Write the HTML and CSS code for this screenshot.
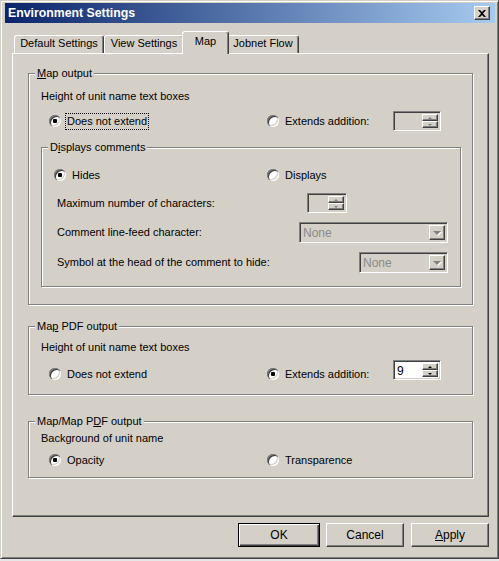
FILE: index.html
```html
<!DOCTYPE html>
<html>
<head>
<meta charset="utf-8">
<title>Environment Settings</title>
<link rel="stylesheet" href="styles.css">
</head>
<body>
<div class="window">
  <div class="titlebar">
    <span class="title">Environment Settings</span>
    <span class="close"><svg width="8" height="7" viewBox="0 0 8 7"><path d="M0 0h2l2 2 2-2h2L5 3.5 8 7H6L4 5 2 7H0l3-3.5z" fill="#000"/></svg></span>
  </div>
  <div class="client">
    <div class="tabs">
      <div class="tab t1">Default Settings</div>
      <div class="tab t2">View Settings</div>
      <div class="tab active t3">Map</div>
      <div class="tab t4">Jobnet Flow</div>
    </div>
    <div class="panel">
      <section class="group g1">
        <div class="gtitle"><span><u>M</u>ap output</span></div>
        <div class="label l1">Height of unit name text boxes</div>
        <div class="row r1">
          <div class="opt w1"><span class="radio on"></span><span class="focus">Does not extend</span></div>
          <div class="opt w2"><span class="radio"></span><span>Extends addition:</span></div>
          <div class="spin off"><div class="field"></div><div class="sbtns"><span class="sb up"></span><span class="sb down"></span></div></div>
        </div>
        <section class="group inner">
          <div class="gtitle"><span>D<u>i</u>splays comments</span></div>
          <div class="row r-hides">
            <div class="opt w3"><span class="radio on"></span><span>Hides</span></div>
            <div class="opt"><span class="radio"></span><span>Displays</span></div>
          </div>
          <div class="row r-max">
            <div class="rlabel wmax">Maximum number of characters:</div>
            <div class="spin off small"><div class="field"></div><div class="sbtns"><span class="sb up"></span><span class="sb down"></span></div></div>
          </div>
          <div class="row r-combo r-comment">
            <div class="rlabel">Comment line-feed character:</div>
            <div class="combo c1"><span class="ctext">None</span><span class="cbtn"></span></div>
          </div>
          <div class="row r-combo r-symbol">
            <div class="rlabel">Symbol at the head of the comment to hide:</div>
            <div class="combo c2"><span class="ctext">None</span><span class="cbtn"></span></div>
          </div>
        </section>
      </section>

      <section class="group g2">
        <div class="gtitle"><span>Ma<u>p</u> PDF output</span></div>
        <div class="label l2">Height of unit name text boxes</div>
        <div class="row r2">
          <div class="opt w1"><span class="radio"></span><span>Does not extend</span></div>
          <div class="opt w2"><span class="radio on"></span><span>Extends addition:</span></div>
          <div class="spin up4"><div class="field">9</div><div class="sbtns"><span class="sb up"></span><span class="sb down"></span></div></div>
        </div>
      </section>

      <section class="group g3">
        <div class="gtitle"><span>Map/Map P<u>D</u>F output</span></div>
        <div class="label l3">Background of unit name</div>
        <div class="row r3">
          <div class="opt w1"><span class="radio on"></span><span>Opacity</span></div>
          <div class="opt"><span class="radio"></span><span>Transparence</span></div>
        </div>
      </section>
    </div>
    <div class="buttons">
      <div class="btn default">OK</div>
      <div class="btn cancel">Cancel</div>
      <div class="btn"><u>A</u>pply</div>
    </div>
  </div>
</div>
</body>
</html>
```

FILE: styles.css
```css
* { box-sizing: border-box; }
html, body { margin: 0; padding: 0; }
body {
  background: #e6e6e6;
  font-family: "Liberation Sans", Arial, sans-serif;
  font-size: 11px;
  line-height: 13px;
  color: #000;
}
u { text-decoration: underline; text-underline-offset: 1px; }

.window {
  width: 499px;
  height: 559px;
  background: #d4d0c8;
  border: 1px solid;
  border-color: #d4d0c8 #404040 #404040 #d4d0c8;
  box-shadow: inset 1px 1px 0 #fff, inset -1px -1px 0 #808080;
  padding: 2px 3px 3px 4px;
  display: flex;
  flex-direction: column;
}

.titlebar {
  height: 20px;
  flex: none;
  background: linear-gradient(to right, #0a246a, #a6caf0);
  display: flex;
  align-items: center;
  justify-content: space-between;
  padding: 0 5px 0 3px;
}
.title {
  color: #fff;
  font-weight: bold;
  font-size: 12.3px;
}
.close {
  width: 16px;
  height: 14px;
  background: #d4d0c8;
  border: 1px solid;
  border-color: #fff #404040 #404040 #fff;
  box-shadow: inset -1px -1px 0 #808080;
  display: flex;
  align-items: center;
  justify-content: center;
}
.close svg { display: block; }

.client {
  display: flex;
  flex-direction: column;
  padding: 9px 6px 0 7px;
}

/* tabs */
.tabs {
  display: flex;
  align-items: flex-end;
  height: 21px;
  padding-left: 2px;
  position: relative;
  z-index: 1;
}
.tab {
  height: 18px;
  padding-top: 1px;
  text-align: center;
  background: #d4d0c8;
  border: 1px solid;
  border-bottom: 0;
  border-color: #fff #404040 transparent #fff;
  box-shadow: inset -1px 0 0 #808080;
  border-radius: 3px 3px 0 0;
  white-space: nowrap;
}
.t1 { width: 90px; }
.t2 { width: 80px; }
.t3 { width: 47px; }
.t4 { width: 72px; }
.tab.active {
  height: 23px;
  padding-top: 3px;
  margin: 0 -2px -1px -2px;
  position: relative;
  z-index: 2;
}

/* panel */
.panel {
  height: 464px;
  border: 1px solid;
  border-color: #fff #404040 #404040 #fff;
  box-shadow: inset -1px -1px 0 #808080;
  padding: 19px 15px 0 15px;
}

/* group boxes */
.group {
  border: 1px solid #808080;
  box-shadow: inset 1px 1px 0 #fff, 1px 1px 0 #fff;
}
.gtitle {
  height: 13px;
  margin: -7px 0 0 -6px;
}
.gtitle span {
  background: #d4d0c8;
  padding: 0 2px;
}
.g1 { padding: 0 11px 17px 12px; }
.g2 { padding: 0 11px 10px 12px; margin-top: 21px; }
.g3 { padding: 0 11px 7px 12px; margin-top: 26px; }
.inner { margin-top: 16px; padding: 0 12px 13px 0; }
.inner .gtitle { margin-left: 6px; }

.label { height: 13px; }
.l1 { margin-top: 10px; }
.l2 { margin-top: 8px; }
.l3 { margin-top: 4px; }

.row {
  display: flex;
  align-items: center;
  height: 20px;
}
.r1 { margin-top: 8px; padding-left: 8px; }
.r2 { margin-top: 10px; padding-left: 8px; }
.r3 { margin-top: 5px; padding-left: 8px; }
.r-hides { margin-top: 11px; padding-left: 12px; }
.r-max { margin-top: 8px; padding-left: 15px; }
.r-combo { height: 21px; margin-top: 9px; padding-left: 15px; justify-content: space-between; }

.opt {
  display: flex;
  align-items: center;
  gap: 6px;
  white-space: nowrap;
}
.w1 { width: 218px; }
.w2 { width: 126px; }
.w3 { width: 213px; }
.wmax { width: 250px; }
.rlabel { white-space: nowrap; }

.focus {
  border: 1px dotted #000;
  padding: 1px 1px;
  margin-left: -2px;
}

/* radio */
.radio {
  width: 12px;
  height: 12px;
  flex: none;
  border-radius: 50%;
  background: #fff;
  box-shadow:
    inset 1px 1px 0 0 #808080,
    inset 2px 2px 0 0 #404040,
    inset -1px -1px 0 0 #fff,
    inset -2px -2px 0 0 #d4d0c8;
  display: flex;
  align-items: center;
  justify-content: center;
}
.radio.on::after {
  content: "";
  width: 4px;
  height: 4px;
  border-radius: 1px;
  background: #000;
}

/* spinner */
.spin {
  width: 48px;
  height: 20px;
  flex: none;
  display: flex;
  padding: 2px;
  background: #fff;
  border: 1px solid;
  border-color: #808080 #fff #fff #808080;
  box-shadow: inset 1px 1px 0 #404040, inset -1px -1px 0 #d4d0c8;
}
.spin.off { background: #d4d0c8; }
.spin.small { width: 40px; }
.spin.up4 { margin-top: -8px; }
.field {
  flex: 1;
  padding-left: 1px;
  font-size: 12px;
  line-height: 16px;
}
.sbtns {
  width: 16px;
  display: flex;
  flex-direction: column;
}
.sb {
  flex: 1;
  background: #d4d0c8;
  border: 1px solid;
  border-color: #fff #404040 #404040 #fff;
  box-shadow: inset -1px -1px 0 #808080;
  display: flex;
  align-items: center;
  justify-content: center;
}
.sb::after {
  content: "";
  width: 0;
  height: 0;
  border-left: 2px solid transparent;
  border-right: 2px solid transparent;
}
.sb.up::after { border-bottom: 2px solid #000; }
.sb.down::after { border-top: 2px solid #000; }
.spin.off .sb.up::after { border-bottom-color: #808080; }
.spin.off .sb.down::after { border-top-color: #808080; }

/* combo */
.combo {
  height: 21px;
  flex: none;
  display: flex;
  padding: 2px;
  background: #d4d0c8;
  border: 1px solid;
  border-color: #808080 #fff #fff #808080;
  box-shadow: inset 1px 1px 0 #404040, inset -1px -1px 0 #d4d0c8;
}
.c1 { width: 149px; }
.c2 { width: 89px; }
.ctext {
  flex: 1;
  color: #8a8a8a;
  padding-left: 1px;
  font-size: 12px;
  line-height: 17px;
}
.cbtn {
  width: 16px;
  background: #d4d0c8;
  border: 1px solid;
  border-color: #fff #404040 #404040 #fff;
  box-shadow: inset -1px -1px 0 #808080;
  display: flex;
  align-items: center;
  justify-content: center;
}
.cbtn::after {
  content: "";
  width: 0;
  height: 0;
  border-left: 4px solid transparent;
  border-right: 4px solid transparent;
  border-top: 4px solid #808080;
  filter: drop-shadow(1px 1px 0 #fff);
}

/* buttons */
.buttons {
  display: flex;
  justify-content: flex-end;
  margin-top: 6px;
}
.btn {
  width: 78px;
  height: 24px;
  display: flex;
  align-items: center;
  justify-content: center;
  background: #d4d0c8;
  border: 1px solid;
  border-color: #fff #404040 #404040 #fff;
  box-shadow: inset -1px -1px 0 #808080;
  font-size: 12px;
}
.btn.default {
  width: 82px;
  margin-right: 6px;
  border-color: #000;
  box-shadow: inset 1px 1px 0 #fff, inset -1px -1px 0 #404040, inset -2px -2px 0 #808080;
}
.btn.cancel { margin-right: 7px; }
```
